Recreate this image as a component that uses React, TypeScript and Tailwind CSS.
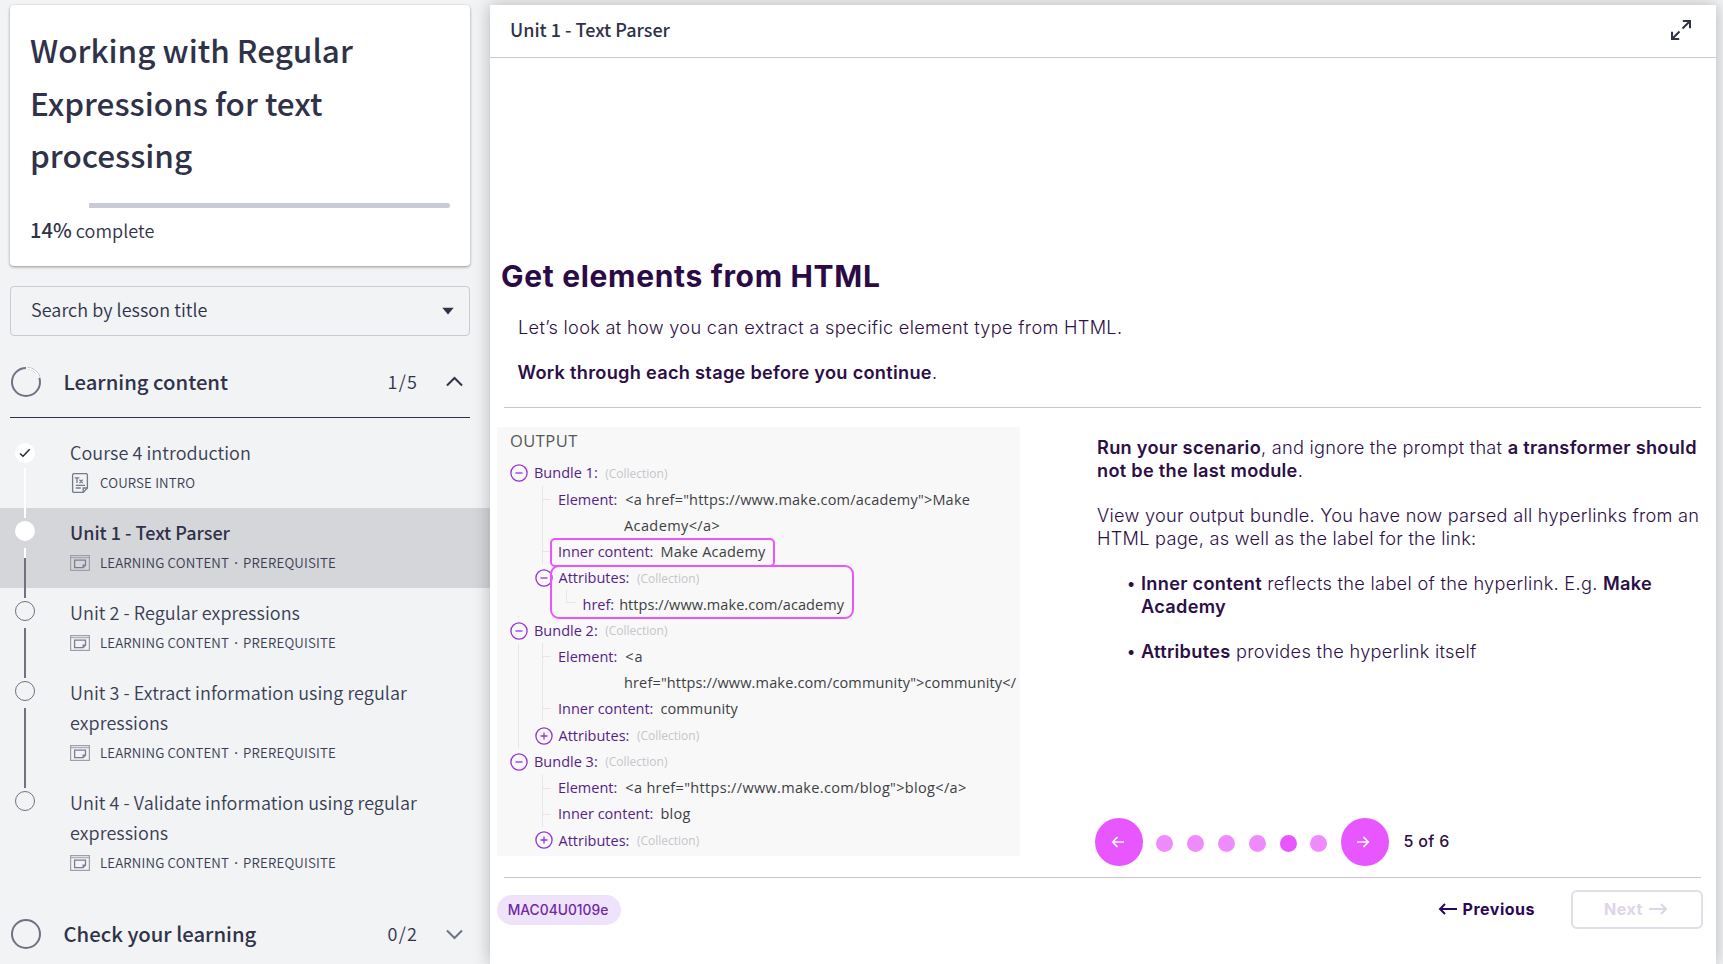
import React from "react";

const SRC = "font-['Noto_Sans_CJK_SC',sans-serif]";
const INTER = "font-['Inter',sans-serif]";

function LessonIcon() {
  return (
    <svg width="20" height="16" viewBox="0 0 20 16" fill="none" stroke="#9c9eac" strokeWidth="1.2" className="mr-[10px] shrink-0">
      <rect x="0.6" y="0.6" width="18.8" height="14.8" />
      <path d="M0.6 2.7h18.8" strokeWidth="1" />
      <path d="M4.6 5.2h10.9v5l-2.400 2.400H4.600z" stroke="#7b7d8e" strokeWidth="1.300" />
      <path d="M15.500 10.200h-2.400v2.400" stroke="#7b7d8e" />
    </svg>
  );
}

function TextIcon() {
  return (
    <svg width="20" height="20" viewBox="0 0 20 20" fill="none" stroke="#767989" strokeWidth="1.300" className="mr-[10px] shrink-0">
      <path d="M4 .6h12q1.400 0 1.400 1.400v13l-4.200 4.400H4q-1.400 0-1.400-1.400V2Q2.600.6 4 .6z" />
      <path d="M17.400 15h-4.200v4.400M5.800 12.400h9.200M5.800 15h5" />
      <path d="M4.700 4.900h4.600M7 4.900V10M9.500 6.800l3.200 3.200M12.700 6.800L9.500 10" />
    </svg>
  );
}

type Lesson = {
  title: string[];
  meta: string[];
  state: "done" | "active" | "todo";
  line: "none" | "white" | "half" | "dark";
};

const required = ["LEARNING CONTENT", "PREREQUISITE"];

const lessons: Lesson[] = [
  { title: ["Course 4 introduction"], meta: ["COURSE INTRO"], state: "done", line: "white" },
  { title: ["Unit 1 - Text Parser"], meta: required, state: "active", line: "half" },
  { title: ["Unit 2 - Regular expressions"], meta: required, state: "todo", line: "dark" },
  { title: ["Unit 3 - Extract information using regular", "expressions"], meta: required, state: "todo", line: "dark" },
  { title: ["Unit 4 - Validate information using regular", "expressions"], meta: required, state: "todo", line: "none" },
];

function LessonRow({ lesson }: { lesson: Lesson }) {
  const { state, line } = lesson;
  return (
    <li className={`flex ${state === "active" ? "bg-[#d5d6da]" : ""}`}>
      <div className="flex w-[70px] flex-col items-start pl-[15px]">
        {state === "done" && (
          <span className="mt-[15px] flex size-5 items-center justify-center rounded-full bg-white">
            <svg width="12" height="10" viewBox="0 0 12 10" fill="none" stroke="#23263b" strokeWidth="1.500">
              <path d="M1 5.500l3 2.700L10.700 1.200" />
            </svg>
          </span>
        )}
        {state === "active" && <span className="mt-[13px] size-5 rounded-full bg-white" />}
        {state === "todo" && <span className="mt-[13px] size-5 rounded-full border border-[#6f7284]" />}
        {line === "white" && <span className="z-[1] -mb-[10px] mt-[5px] ml-[9px] w-[2px] grow bg-white" />}
        {line === "half" && (
          <span className="-mb-[10px] mt-[7px] ml-[9px] flex w-[2px] grow flex-col bg-[#6f7284]">
            <span className="h-[10px] bg-white" />
          </span>
        )}
        {line === "dark" && <span className="-mb-[10px] mt-[7px] ml-[9px] w-[2px] grow bg-[#6f7284]" />}
      </div>
      <div className="pb-[10px] pt-[9px]">
        {lesson.title.map((t) => (
          <p
            key={t}
            className={`whitespace-nowrap text-[18px] leading-[30px] ${state === "active" ? "font-medium" : "font-[350] tracking-[0.050px] text-[#3a3d53]"}`}
          >
            {t}
          </p>
        ))}
        <div className="flex h-[31px] items-center">
          {state === "done" ? <TextIcon /> : <LessonIcon />}
          <span className="flex whitespace-nowrap text-[13.300px] font-[350] leading-[20px] tracking-[0.150px] text-[#3a3d53]">
            {lesson.meta.map((m, i) => (
              <React.Fragment key={m}>
                {i > 0 && <span className="w-[14px] text-center font-['Open_Sans',sans-serif] font-semibold">·</span>}
                <span>{m}</span>
              </React.Fragment>
            ))}
          </span>
        </div>
      </div>
    </li>
  );
}

function Sidebar() {
  return (
    <aside className={`flex w-[490px] shrink-0 flex-col bg-[#f1f3f5] text-[#2f3248] *:shrink-0 ${SRC}`}>
      <section className="ml-[10px] mr-[20px] mt-[5px] h-[261px] rounded bg-white px-5 pt-[18px] shadow-[0_1px_3px_rgba(0,0,0,0.4)]">
        <h1 className="whitespace-nowrap text-[31.500px] font-medium leading-[52.700px]">
          Working with Regular
          <br />
          Expressions for text
          <br />
          processing
        </h1>
        <div className="mt-[22px] flex h-[5px] justify-end overflow-hidden rounded-full">
          <div className="w-[361px] bg-[#c8cad5]" />
        </div>
        <p className="mt-[7px] text-[18px] font-[350] leading-[30px] tracking-[0.050px]">
          <span className="text-[20px] font-medium">14%</span> complete
        </p>
      </section>
      <div className="ml-[10px] mr-[20px] mt-[20px] flex h-[50px] items-center justify-between rounded border border-[#c8cad5] pl-[20px] pr-[15px]">
        <span className="mb-[4px] text-[18px] font-[350] leading-[30px] tracking-[0.050px]">Search by lesson title</span>
        <svg width="12" height="8" viewBox="0 0 12 8" fill="#2f3248">
          <path d="M0.300 .8h11.400L6 7.400z" />
        </svg>
      </div>
      <div className="ml-[10px] mr-[20px] mt-[10px] flex h-[72px] items-center border-b border-[#2f3248]">
        <svg width="32" height="32" viewBox="0 0 32 32" fill="none" strokeWidth="2">
          <circle cx="16" cy="16" r="14" stroke="#6f7284" />
          <path d="M16 2a14 14 0 0 1 13.300 9.700" stroke="#fff" />
        </svg>
        <h2 className="mb-[1px] ml-[21.500px] grow text-[20.300px] font-medium leading-[30px]">Learning content</h2>
        <span className="text-[18px] font-[350] tracking-[1.200px]">1/5</span>
        <svg className="ml-[27.500px] mr-[7.500px]" width="17" height="11" viewBox="0 0 17 11" fill="none" stroke="#2f3248" strokeWidth="2">
          <path d="M1 9.500l7.500-7.500L16 9.500" />
        </svg>
      </div>
      <ul className="mt-[10px]">
        {lessons.map((l) => (
          <LessonRow key={l.title[0]} lesson={l} />
        ))}
      </ul>
      <div className="ml-[10px] mr-[20px] mt-[10px] flex h-[72px] items-center">
        <svg width="32" height="32" viewBox="0 0 32 32" fill="none" strokeWidth="2">
          <circle cx="16" cy="16" r="14" stroke="#6f7284" />
        </svg>
        <h2 className="mb-[2px] ml-[21.500px] grow text-[20.300px] font-medium leading-[30px]">Check your learning</h2>
        <span className="mb-[2px] text-[18px] font-[350] tracking-[1.200px]">0/2</span>
        <svg className="ml-[27.500px] mr-[7.500px]" width="17" height="11" viewBox="0 0 17 11" fill="none" stroke="#6f7284" strokeWidth="2">
          <path d="M1 1.500L8.500 9 16 1.500" />
        </svg>
      </div>
    </aside>
  );
}

function Toggle({ open }: { open: boolean }) {
  return (
    <svg width="18" height="18" viewBox="0 0 18 18" fill="none" stroke="#9333d6" strokeWidth="1.300" className="mr-[6px] shrink-0">
      <circle cx="9" cy="9" r="8.100" />
      <path d={open ? "M5.500 9h7" : "M5.500 9h7M9 5.500v7"} />
    </svg>
  );
}

type TreeLine = { kind: "bundle" | "attr" | "field" | "sub" | "cont"; name?: string; value?: string; open?: boolean; style?: string };

const tree: TreeLine[] = [
  { kind: "bundle", name: "Bundle 1:", open: true },
  { kind: "field", name: "Element:", value: '<a href="https://www.make.com/academy">Make', style: "tracking-[0.200px]" },
  { kind: "cont", value: "Academy</a>", style: "tracking-[0.400px]" },
  { kind: "field", name: "Inner content:", value: "Make Academy", style: "-ml-[1px] tracking-[0.220px]" },
  { kind: "attr", name: "Attributes:", open: true },
  { kind: "sub", name: "href:", value: "https://www.make.com/academy", style: "-ml-[3px] tracking-[0.060px]" },
  { kind: "bundle", name: "Bundle 2:", open: true },
  { kind: "field", name: "Element:", value: "<a", style: "tracking-[0.800px]" },
  { kind: "cont", value: 'href="https://www.make.com/community">community</', style: "tracking-[0.150px]" },
  { kind: "field", name: "Inner content:", value: "community", style: "-ml-[1px] tracking-[0.120px]" },
  { kind: "attr", name: "Attributes:", open: false },
  { kind: "bundle", name: "Bundle 3:", open: true },
  { kind: "field", name: "Element:", value: '<a href="https://www.make.com/blog">blog</a>', style: "tracking-[0.330px]" },
  { kind: "field", name: "Inner content:", value: "blog", style: "-ml-[1px] tracking-[0.300px]" },
  { kind: "attr", name: "Attributes:", open: false },
];

const indent = { bundle: "pl-[13px]", attr: "pl-[37.500px]", field: "pl-[61px]", sub: "pl-[85.500px]", cont: "pl-[127px]" };

function OutputPanel() {
  return (
    <div className="relative h-[429px] w-[523px] shrink-0 bg-[#f8f8f8] font-['Open_Sans',sans-serif] text-[14.500px] text-[#3c4043]">
      <div className="h-[39px] pl-[13px] pt-[1px] text-[16.500px] leading-[26px] tracking-[0.450px] text-[#55585c]">OUTPUT</div>
      <div className="mr-[3px] -mt-[5.800px]">
        {tree.map((l, i) => (
          <div key={i} className={`flex h-[26.220px] items-center whitespace-nowrap ${indent[l.kind]}`}>
            {(l.kind === "bundle" || l.kind === "attr") && <Toggle open={!!l.open} />}
            {l.name && <span className="mr-[8px] text-[#561e87]">{l.name}</span>}
            {l.value && <span className={l.style}>{l.value}</span>}
            {(l.kind === "bundle" || l.kind === "attr") && <span className="-ml-[0.500px] pt-[1px] text-[12px] text-[#c4c6ca]">(Collection)</span>}
          </div>
        ))}
      </div>
      <svg className="absolute left-0 top-0" width="523" height="429" viewBox="497 427 523 429" fill="none" stroke="#e6e6e8" strokeWidth="1">
        <path d="M542.500 486v78M543 499.500h7.500M543 551.500h7.500M566.500 590v12.500h9M518.500 616v2M518.500 644v104M542.500 643v78M543 656.500h7.500M543 708.500h7.500M542.500 775v52M543 788.500h7.500M543 814.500h7.500" />
      </svg>
      <div className="absolute left-[53px] top-[111px] h-[29px] w-[225px] rounded-[5px] border-2 border-[#ea55fb]" />
      <div className="absolute left-[53px] top-[138px] h-[54px] w-[304px] rounded-[9px] border-2 border-[#ea55fb]" />
    </div>
  );
}

function Pager() {
  return (
    <div className="flex h-[48px] items-center">
      <span className="flex size-[48px] items-center justify-center rounded-full bg-[#e756ff]">
        <svg width="14" height="12" viewBox="0 0 14 12" fill="none" stroke="#fff" strokeWidth="1.700" className="-ml-[3px]">
          <path d="M13 6H2M6.500 1L1.700 6l4.800 5" />
        </svg>
      </span>
      <div className="ml-[13px] mt-[2px] flex gap-[13.900px]">
        {[1, 2, 3, 4, 5, 6].map((n) => (
          <span key={n} className={`size-[17px] rounded-full ${n === 5 ? "bg-[#e756ff]" : "bg-[#f08bff]"}`} />
        ))}
      </div>
      <span className="ml-[14px] flex size-[48px] items-center justify-center rounded-full bg-[#e756ff]">
        <svg width="14" height="12" viewBox="0 0 14 12" fill="none" stroke="#fff" strokeWidth="1.700" className="-ml-[4px]">
          <path d="M1 6h11M7.500 1l4.800 5-4.800 5" />
        </svg>
      </span>
      <span className="mb-[2px] ml-[14px] text-[16px] font-medium leading-[20px] tracking-[0.350px]">5 of 6</span>
    </div>
  );
}

function Content() {
  return (
    <main className="relative z-10 mr-[7px] mt-[5px] flex grow flex-col bg-white shadow-[0_0_16px_rgba(0,0,0,0.260)]">
      <header className={`flex h-[53px] items-center justify-between border-b border-[#c8cad5] pb-[3px] pl-[20px] pr-[24px] text-[#2f3248] ${SRC}`}>
        <span className="mb-[1px] text-[18px] font-medium leading-[30px]">Unit 1 - Text Parser</span>
        <svg width="22" height="22" viewBox="0 0 22 22" fill="none" stroke="#2f3248" strokeWidth="2">
          <path d="M12.500 9.500l7-7M12.800 2h7.200v7.200M9.500 12.500l-7 7M9.200 20H2v-7.200" />
        </svg>
      </header>
      <div className={`flex flex-col text-[#2c0f46] ${INTER}`}>
        <h1 className="ml-[11px] mt-[198px] whitespace-nowrap text-[30px] font-bold leading-[40px] tracking-[0.680px] text-[#2b0a45]">Get elements from HTML</h1>
        <p className="ml-[28px] mt-[20px] whitespace-nowrap text-[18.200px] font-light leading-[23px] tracking-[0.300px]">Let’s look at how you can extract a specific element type from HTML.</p>
        <p className="ml-[27.500px] mt-[22px] whitespace-nowrap text-[18.200px] font-light leading-[23px] tracking-[0.280px]">
          <b className="font-semibold">Work through each stage before you continue</b>.
        </p>
        <hr className="ml-[14px] mr-[15px] mt-[23px] border-[#c9c6cb]" />
        <div className="ml-[7px] mt-[19px] flex">
          <OutputPanel />
          <div className="ml-[77px] flex flex-col text-[18.200px] font-light leading-[22.700px] tracking-[0.250px] [&_b]:font-semibold [&_b]:tracking-[0.280px]">
            <p className="mt-[9px] whitespace-nowrap">
              <b>Run your scenario</b>, and ignore the prompt that <b>a transformer should</b>
              <br />
              <b>not be the last module</b>.
            </p>
            <p className="mt-[22.500px] whitespace-nowrap">
              View your output bundle. You have now parsed all hyperlinks from an
              <br />
              HTML page, as well as the label for the link:
            </p>
            <ul className="mt-[22.500px] space-y-[22.500px] whitespace-nowrap pl-[29px] tracking-[0.290px]">
              <li className="flex">
                <span className="w-[15px]">•</span>
                <span>
                  <b>Inner content</b> reflects the label of the hyperlink. E.g. <b>Make</b>
                  <br />
                  <b>Academy</b>
                </span>
              </li>
              <li className="flex">
                <span className="w-[15px]">•</span>
                <span>
                  <b>Attributes</b> provides the hyperlink itself
                </span>
              </li>
            </ul>
            <div className="-ml-[2px] mt-[155.600px] tracking-normal">
              <Pager />
            </div>
          </div>
        </div>
        <hr className="ml-[14px] mr-[15px] mt-[11px] border-[#c9c6cb]" />
        <footer className="ml-[7px] mr-[13px] mt-[12px] flex h-[39px] items-center">
          <span className="flex h-[30px] w-[124px] items-center justify-center rounded-full bg-[#efe3fb] pr-[2px] pt-[1px] text-[13.800px] font-medium text-[#6e29a3]">MAC04U0109e</span>
          <span className="mb-[2px] ml-auto flex items-center gap-[6px] text-[16px] font-bold tracking-[0.500px] text-[#2b0757]">
            <svg width="19" height="12" viewBox="0 0 19 12" fill="none" stroke="currentColor" strokeWidth="2">
              <path d="M19 6H2M7 1L2 6l5 5" />
            </svg>
            Previous
          </span>
          <span className="ml-[36px] flex h-[39px] w-[132px] items-center justify-center gap-[6px] rounded-md border-2 border-[#e2dcec] pb-[2px] pr-[2px] text-[16px] font-bold tracking-[0.600px] text-[#ddd5e8]">
            Next
            <svg width="19" height="12" viewBox="0 0 19 12" fill="none" stroke="currentColor" strokeWidth="2">
              <path d="M0 6h17M12 1l5 5-5 5" />
            </svg>
          </span>
        </footer>
      </div>
    </main>
  );
}

export default function App() {
  return (
    <div className="flex h-[964px] w-[1723px] overflow-hidden bg-[#f1f3f5]">
      <Sidebar />
      <Content />
    </div>
  );
}
